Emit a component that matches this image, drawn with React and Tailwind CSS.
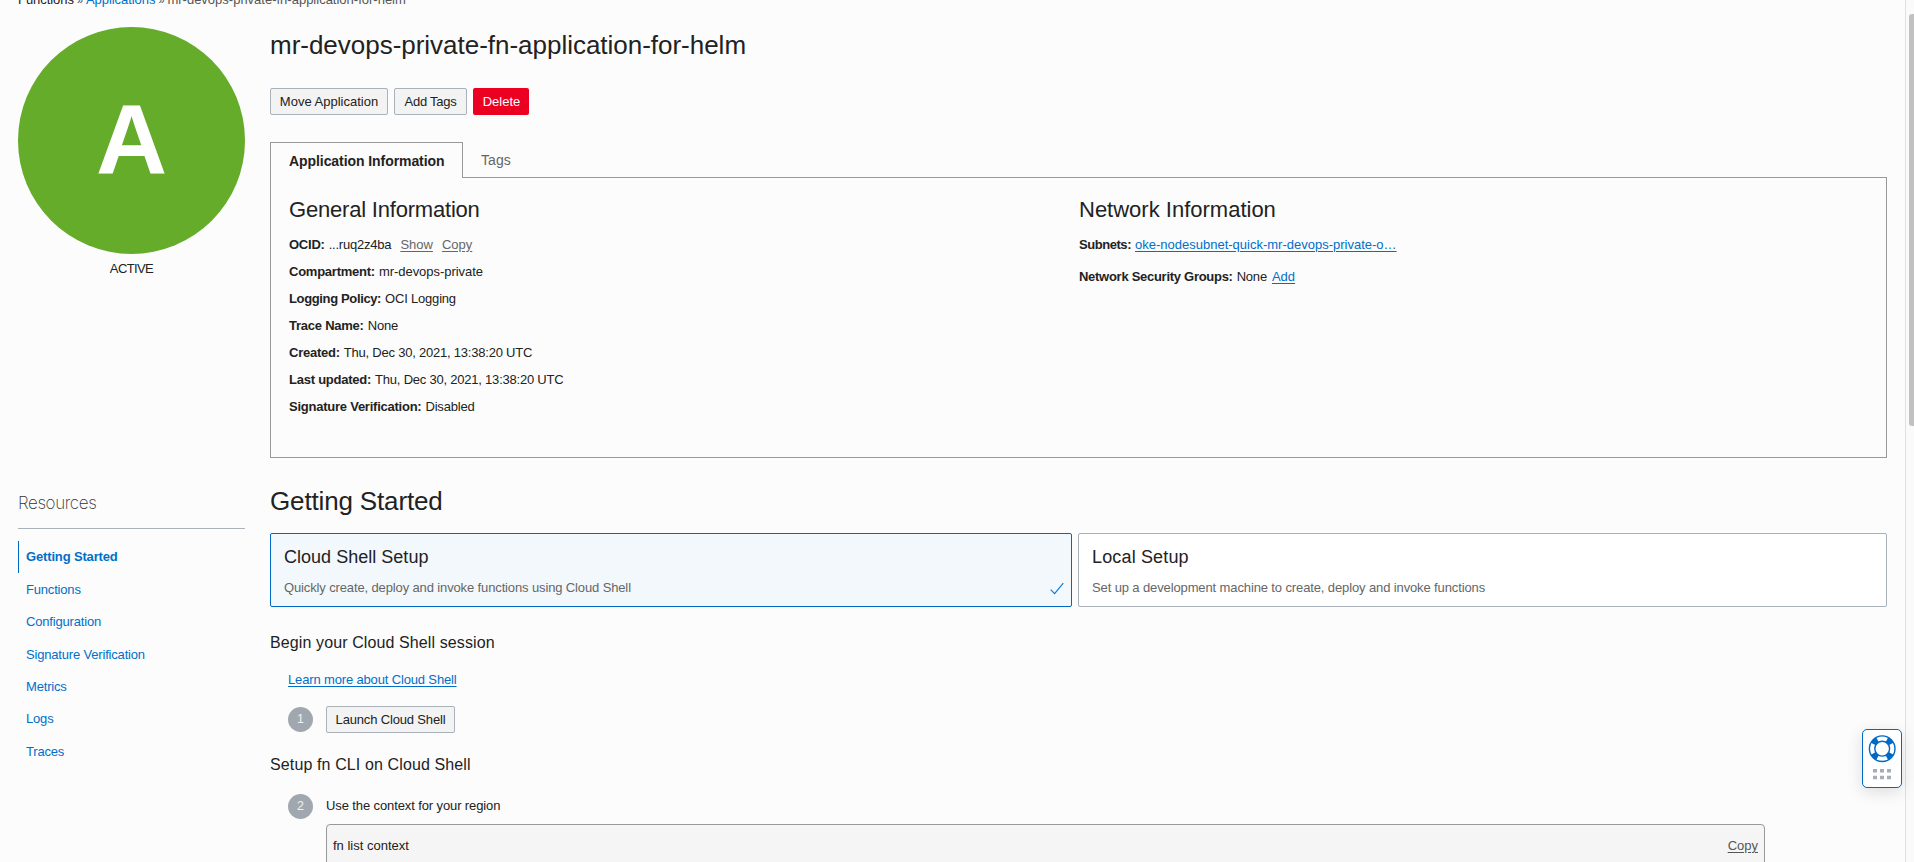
const details = [
  { label: "Compartment:", value: "mr-devops-private", tracking: "tracking-[-0.05px]" },
  { label: "Logging Policy:", value: "OCI Logging", tracking: "tracking-[-0.2px]", labelTracking: "tracking-[-0.36px]" },
  { label: "Trace Name:", value: "None", tracking: "tracking-[-0.2px]" },
  { label: "Created:", value: "Thu, Dec 30, 2021, 13:38:20 UTC", tracking: "tracking-[-0.22px]" },
  { label: "Last updated:", value: "Thu, Dec 30, 2021, 13:38:20 UTC", tracking: "tracking-[-0.22px]" },
  { label: "Signature Verification:", value: "Disabled", tracking: "tracking-[-0.2px]" },
];

const resources = ["Functions", "Configuration", "Signature Verification", "Metrics", "Logs", "Traces"];

function Label({ children, tracking = "tracking-[-0.24px]" }) {
  return <b className={`mr-1 ${tracking}`}>{children}</b>;
}

function Button({ children, className = "" }) {
  return (
    <button
      className={`flex h-[27px] shrink-0 items-center justify-center whitespace-nowrap rounded-[2px] border border-[#a9b1ba] bg-[#f3f3f3] ${className}`}
    >
      {children}
    </button>
  );
}

function Step({ n }) {
  return (
    <span className="flex size-[25px] shrink-0 items-center justify-center rounded-full bg-[#a0a7ae] text-[12.5px] text-[#eff0f1]">
      {n}
    </span>
  );
}

function Sidebar() {
  return (
    <aside className="flex w-[227px] shrink-0 flex-col pt-[17px]">
      <div className="flex h-[227px] items-center justify-center rounded-full bg-[#64ac2a] text-[98.5px] font-bold leading-none text-white">
        <span className="relative top-[-1px]">A</span>
      </div>
      <div className="mt-[5px] text-center leading-5 tracking-[-0.6px]">ACTIVE</div>
      <h2 className="mt-[212px] border-b border-[#a9b1ba] pb-[13px] font-['Inter'] text-[17px] font-extralight leading-6 tracking-[-0.4px] text-[#333]">
        Resources
      </h2>
      <nav className="mt-3 flex flex-col text-[#006fc9]">
        <a className="mb-px h-8 border-l border-[#0068c5] pl-[7px] font-bold leading-8 tracking-[-0.15px]">Getting Started</a>
        {resources.map((r) => (
          <a key={r} className="h-[32.33px] pl-2 leading-[32.5px] tracking-[-0.18px]">
            {r}
          </a>
        ))}
      </nav>
    </aside>
  );
}

function InfoPanel() {
  return (
    <section className="mt-[27px] flex flex-col">
      <div className="flex h-9 items-center text-sm">
        <div className="relative z-10 flex h-9 w-[193px] items-center border border-b-0 border-[#999] bg-[#fcfcfc] pl-[18px] font-bold tracking-[-0.07px]">
          Application Information
        </div>
        <div className="pl-[18px] tracking-[0.1px] text-[#666]">Tags</div>
      </div>
      <div className="-mt-px flex h-[281px] border border-[#999] pl-[18px] pt-[18px]">
        <div className="w-[790px]">
          <h2 className="mb-[7px] text-[22px] leading-7 tracking-[-0.2px]">General Information</h2>
          <div className="flex h-[27px] items-center whitespace-pre">
            <Label>OCID:</Label>
            <span className="tracking-[-0.21px]">...ruq2z4ba</span>
            <a className="ml-[9px] text-[#666] underline underline-offset-2">Show</a>
            <a className="ml-[9px] text-[#666] underline underline-offset-2">Copy</a>
          </div>
          {details.map((d) => (
            <div key={d.label} className="flex h-[27px] items-center">
              <Label tracking={d.labelTracking}>{d.label}</Label>
              <span className={d.tracking}>{d.value}</span>
            </div>
          ))}
        </div>
        <div>
          <h2 className="mb-[7px] text-[22px] leading-7">Network Information</h2>
          <div className="flex h-[27px] items-center">
            <Label tracking="tracking-[-0.45px]">Subnets:</Label>
            <a className="text-[#006fc9] underline underline-offset-2">oke-nodesubnet-quick-mr-devops-private-o…</a>
          </div>
          <div className="mt-[5px] flex h-[27px] items-center">
            <Label tracking="tracking-[-0.28px]">Network Security Groups:</Label>
            <span className="tracking-[-0.2px]">None</span>
            <a className="ml-[5px] text-[#006fc9] underline underline-offset-2">Add</a>
          </div>
        </div>
      </div>
    </section>
  );
}

function SetupCards() {
  return (
    <div className="mt-4 flex gap-[6px]">
      <div className="flex h-[74px] w-[802px] justify-between rounded-[2px] border border-[#0068c5] bg-[#f3f8fd] pl-[13px] pt-[11px]">
        <div>
          <h3 className="text-lg leading-6 tracking-[0.02px]">Cloud Shell Setup</h3>
          <p className="mt-[9px] leading-5 tracking-[-0.13px] text-[#666]">
            Quickly create, deploy and invoke functions using Cloud Shell
          </p>
        </div>
        <svg className="mr-[7px] mt-[37px]" width="14" height="13" viewBox="0 0 14 13" fill="none" stroke="#0a78d0" strokeWidth="1.1">
          <path d="M.7 7.6 4.6 11.6 13.3 1.2" />
        </svg>
      </div>
      <div className="h-[74px] flex-1 rounded-[2px] border border-[#a9b1ba] bg-white pl-[13px] pt-[11px]">
        <h3 className="text-lg leading-6 tracking-[0.15px]">Local Setup</h3>
        <p className="mt-[9px] leading-5 tracking-[-0.12px] text-[#666]">
          Set up a development machine to create, deploy and invoke functions
        </p>
      </div>
    </div>
  );
}

function HelpWidget() {
  return (
    <div className="absolute left-[1862px] top-[729px] flex h-[59px] w-10 justify-center rounded-[5px] border border-[#0068c5] bg-white shadow-[0_4px_16px_rgba(0,0,0,0.13)]">
      <svg width="38" height="57" viewBox="0 0 38 57" fill="none">
        <g stroke="#0068c5">
          <circle cx="19.2" cy="18.7" r="12.8" strokeWidth="1.4" />
          <circle cx="19.2" cy="18.7" r="7.4" strokeWidth="1.4" />
          <circle
            cx="19.2"
            cy="18.7"
            r="10"
            strokeWidth="5.4"
            pathLength="360"
            strokeDasharray="34 56"
            strokeDashoffset="-28"
          />
        </g>
        <g fill="#a5adb5">
          <path d="M10 39h4v3.6h-4zM17 39h4v3.6h-4zM24 39h4v3.6h-4zM10 45.7h4v3.6h-4zM17 45.7h4v3.6h-4zM24 45.7h4v3.6h-4z" />
        </g>
      </svg>
    </div>
  );
}

export default function App() {
  return (
    <div className="relative flex h-[862px] w-[1914px] overflow-hidden bg-[#fcfcfc] font-['Liberation_Sans',Arial,sans-serif] text-[13px] text-[#222]">
      <div className="flex w-[1905px] flex-col pl-[18px] pr-[18px]">
        <div className="-mt-[10px] flex h-5 shrink-0 items-center whitespace-nowrap">
          <span className="tracking-[-0.05px]">Functions</span>
          <span className="ml-[3px] w-[9px] text-[11px] text-[#555]">»</span>
          <a className="tracking-[-0.05px] text-[#006fc9]">Applications</a>
          <span className="ml-[3px] w-[9px] text-[11px] text-[#555]">»</span>
          <span className="text-[#555]">mr-devops-private-fn-application-for-helm</span>
        </div>
        <div className="flex gap-[25px]">
          <Sidebar />
          <main className="flex min-w-0 flex-1 flex-col pt-[19px]">
            <h1 className="text-[26px] leading-8 tracking-[-0.02px]">mr-devops-private-fn-application-for-helm</h1>
            <div className="mt-[27px] flex gap-[6px]">
              <Button className="w-[118px]">Move Application</Button>
              <Button className="w-[73px] tracking-[-0.24px]">Add Tags</Button>
              <button className="h-[27px] w-14 rounded-[2px] bg-[#ec0021] pl-px text-white">Delete</button>
            </div>
            <InfoPanel />
            <h2 className="mt-[27px] text-[26px] leading-8 tracking-[-0.15px]">Getting Started</h2>
            <SetupCards />
            <h3 className="mt-6 text-base leading-6 tracking-[0.11px]">Begin your Cloud Shell session</h3>
            <div className="ml-[18px] mt-[15px] leading-5">
              <a className="tracking-[-0.15px] text-[#006fc9] underline underline-offset-2">Learn more about Cloud Shell</a>
            </div>
            <div className="ml-[18px] mt-4 flex items-center gap-[13px]">
              <Step n="1" />
              <Button className="w-[129px] tracking-[-0.16px]">Launch Cloud Shell</Button>
            </div>
            <h3 className="mt-5 text-base leading-6 tracking-[0.12px]">Setup fn CLI on Cloud Shell</h3>
            <div className="ml-[18px] mt-[17px] flex gap-[13px]">
              <Step n="2" />
              <div className="w-[1439px]">
                <p className="mt-[2px] leading-5 tracking-[-0.11px]">Use the context for your region</p>
                <div className="mt-2 flex h-20 justify-between rounded-[4px] border border-[#999] bg-[#f5f5f5] px-[6px] pt-[11px] leading-5">
                  <span>fn list context</span>
                  <a className="text-[#555] underline underline-offset-2">Copy</a>
                </div>
              </div>
            </div>
          </main>
        </div>
      </div>
      <div className="w-[9px] border-l border-[#e0e0e0] bg-[#fafafa] pl-[3px] pt-[14px]">
        <div className="h-[412px] rounded-l-[3px] bg-[#c1c1c1]" />
      </div>
      <HelpWidget />
    </div>
  );
}
